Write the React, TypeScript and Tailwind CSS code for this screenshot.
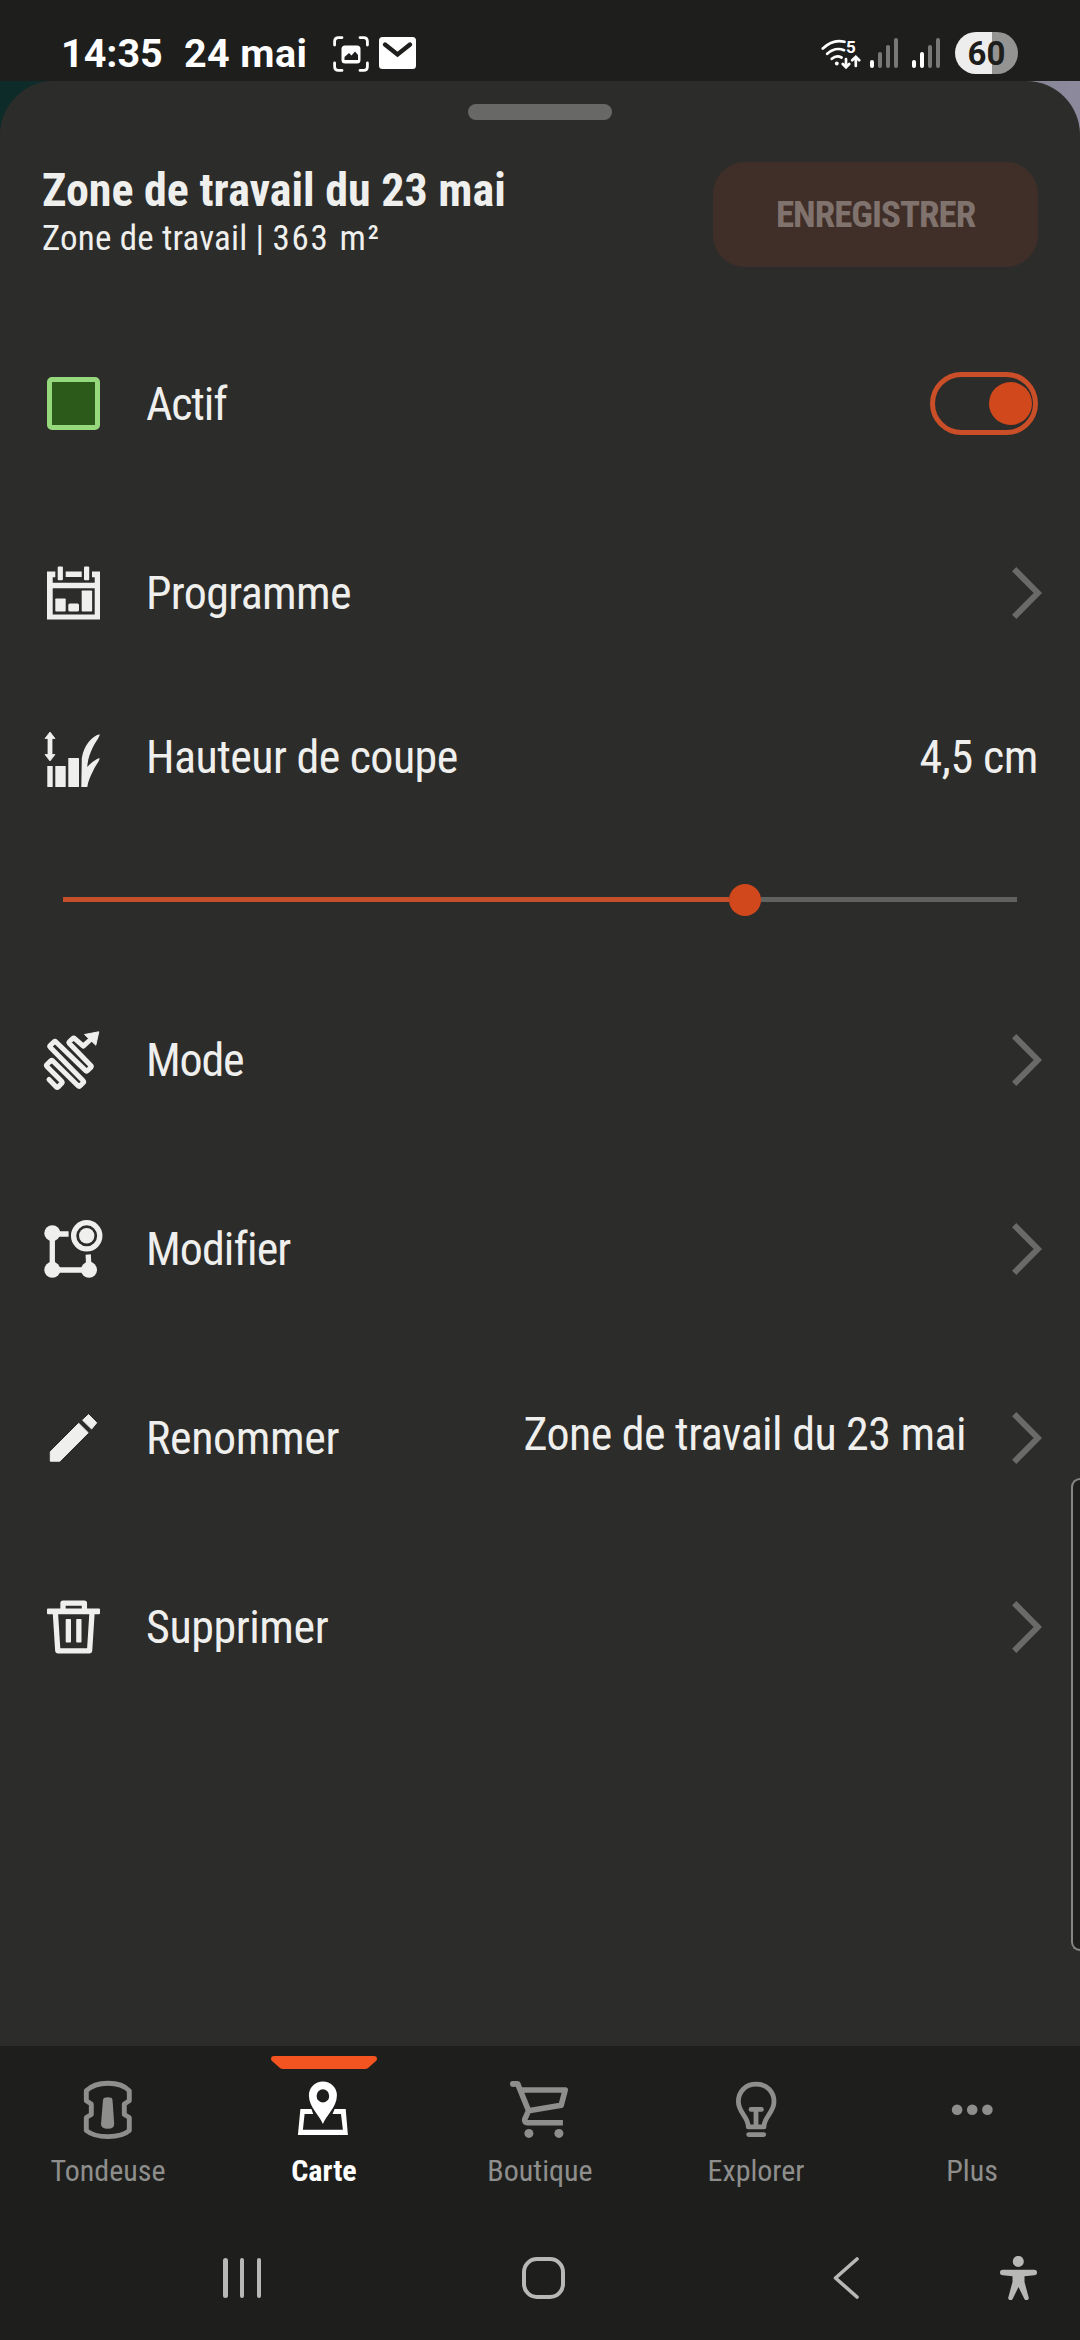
import React from "react";

type IconProps = { children: React.ReactNode; className?: string };

const Icon = ({ children, className = "text-[#efefed]" }: IconProps) => (
  <svg viewBox="0 0 60 60" fill="currentColor" className={`size-[60px] shrink-0 overflow-visible ${className}`}>
    {children}
  </svg>
);

const ScheduleIcon = () => (
  <Icon>
    <path d="M3 8.5H11.3V14.2H8.7V19.8H50.7V14.2H48V8.5H56V56.5H3ZM8.7 25.2V51.5H50.7V25.2Z" fillRule="evenodd" />
    <rect x="21.7" y="8.5" width="16" height="5.5" />
    <rect x="13.7" y="3.5" width="5.2" height="13.7" rx="1" />
    <rect x="40" y="3.5" width="5.2" height="13.7" rx="1" />
    <rect x="11.3" y="35.5" width="10.4" height="13" rx="0.8" />
    <rect x="24.3" y="40.5" width="10.7" height="8" rx="1.5" />
    <rect x="37.7" y="27.5" width="10.4" height="21" rx="0.8" />
  </Icon>
);

const HeightIcon = () => (
  <Icon>
    <path d="M6 5L11 11.5H8V27.5H11L6 34L1 27.5H4V11.5H1Z" stroke="currentColor" strokeWidth="0.8" strokeLinejoin="round" />
    <rect x="3.3" y="39" width="5.4" height="21" />
    <rect x="11.3" y="39" width="10.4" height="21" rx="0.6" />
    <rect x="24.3" y="31" width="10.7" height="29" rx="0.6" />
    <path d="M37.3 60L37.8 31C40 18 48 9.5 55.5 7.3C56.5 9 51 16 49 20C46 26 43.5 33 43.3 40C47 36 51 32.5 55.5 31C56 33 52 38 50 42C46.5 49 44 54 43.3 60Z" />
  </Icon>
);

const ModeIcon = () => (
  <Icon>
    <path
      d="M5 49.5L12.3 57Q13.2 57.9 14.2 57L17.7 53.3Q18.6 52.3 17.7 51.3L2.9 36.4Q2 35.4 2.9 34.5L6.7 30.8Q7.7 29.9 8.6 30.8L34 55.8Q35 56.8 36 55.9L39.2 52.8Q40.1 51.8 39.2 50.8L6.2 17.2Q5.3 16.2 6.3 15.3L10 11.9Q11 11 12 12L41.7 40.6Q42.7 41.5 43.6 40.6L46.8 37.5Q47.7 36.5 46.8 35.5L25.4 13.4Q24.5 12.5 25.5 11.5L28.7 8.5Q29.7 7.6 30.7 8.6L39.3 16.2L46 10"
      fill="none"
      stroke="currentColor"
      strokeWidth="5"
      strokeLinejoin="round"
      strokeLinecap="round"
    />
    <path d="M54.8 1.8L40.5 4.5L51.8 15.2Z" stroke="currentColor" strokeWidth="1" strokeLinejoin="round" />
  </Icon>
);

const EditAreaIcon = () => (
  <Icon>
    <circle cx="8.3" cy="14.2" r="8" />
    <circle cx="8.3" cy="50.8" r="8" />
    <circle cx="45" cy="50.8" r="8" />
    <circle cx="42.7" cy="16.8" r="7.7" />
    <g fill="none" stroke="currentColor" strokeWidth="5.3">
      <circle cx="42.7" cy="16.8" r="13.1" />
      <path d="M8.3 14V51H45L44.2 35.5M10 15H24.6" />
    </g>
  </Icon>
);

const PencilIcon = () => (
  <Icon>
    <g stroke="currentColor" strokeWidth="1" strokeLinejoin="round">
      <path d="M6.3 53.2V43.8L34.7 15.3L44.2 24.7L15.8 53.2Z" />
      <path d="M38.6 12.2L44.6 6.6L52.7 14.8L47.6 21Z" />
    </g>
  </Icon>
);

const TrashIcon = () => (
  <Icon>
    <rect x="3" y="11.5" width="53" height="5.7" rx="1" />
    <g fill="none" stroke="currentColor" strokeWidth="5.3" strokeLinejoin="round">
      <path d="M19 13V6.2H40.4V13" />
      <path d="M11.4 16L13.8 53.8H45.6L48 16" />
    </g>
    <rect x="21.7" y="22" width="5.3" height="23.5" rx="0.8" />
    <rect x="32.2" y="22" width="5.3" height="23.5" rx="0.8" />
  </Icon>
);

const Chevron = () => (
  <svg viewBox="0 0 30 52" className="h-[52px] w-[30px] shrink-0 text-[#6a6a68]" fill="none" stroke="currentColor" strokeWidth="6">
    <path d="M2.2 2.2L25.8 26L2.2 49.8" />
  </svg>
);

const MowerIcon = () => (
  <Icon className="">
    <path
      d="M30 3.2C21 3.2 13 6 8.3 10.8V20.8L13.3 24V34.5L8.3 37.5V50.5C13 54.5 21 56.6 30 56.6S47 54.5 51.3 50.5V37.5L46.3 34.5V24L51.3 20.8V10.8C47 6 39 3.2 30 3.2Z"
      fill="none"
      stroke="currentColor"
      strokeWidth="4.9"
      strokeLinejoin="round"
    />
    <path d="M26.5 17.7Q30 16.9 33.2 17.7Q34.2 18 34.5 20L36.2 44Q36.3 48.6 30 48.8Q22.8 48.6 23 44L25 20Q25.3 18 26.5 17.7Z" />
  </Icon>
);

const MapIcon = () => (
  <Icon className="">
    <path
      fillRule="evenodd"
      d="M28.9 44C26 36 14.9 27 14.9 15.5A14 14 0 0 1 42.9 15.5C42.9 27 31.8 36 28.9 44ZM28.9 9.3A6.3 6.6 0 1 0 28.9 22.5A6.3 6.6 0 1 0 28.9 9.3Z"
    />
    <path d="M6.4 29H17.4L19.2 34H10.6L8.9 49.7H48.9L47 34H38.5L40.6 29H51.7L53.9 55H3.9Z" />
  </Icon>
);

const CartIcon = () => (
  <Icon className="">
    <path
      d="M2.5 3.9H7.7L18.6 30.7L51.2 25.3L55.2 10H12M18.6 30.7L14.8 39.2Q14 42.8 17.5 42.8H52.9"
      fill="none"
      stroke="currentColor"
      strokeWidth="5.6"
      strokeLinejoin="round"
    />
    <circle cx="2.8" cy="3.9" r="2.8" />
    <circle cx="18.9" cy="53.4" r="4.5" />
    <circle cx="48.9" cy="53.4" r="4.5" />
  </Icon>
);

const BulbIcon = () => (
  <Icon className="">
    <g fill="none" stroke="currentColor" strokeWidth="4.8" strokeLinejoin="round" strokeLinecap="round">
      <path d="M22.3 46.9C22.3 36 12.4 33 12.4 21.8C12.4 11 20 4.2 30.2 4.2S48 11 48 21.8C48 33 38 36 38 46.9Z" />
      <path d="M25 29.4H35.4M30 29.4V46" />
      <path d="M22.7 54.6H37.7" />
    </g>
  </Icon>
);

const DotsIcon = () => (
  <Icon className="">
    <circle cx="15.1" cy="29.7" r="5.3" />
    <circle cx="30.2" cy="29.7" r="5.3" />
    <circle cx="45.4" cy="29.7" r="5.3" />
  </Icon>
);

const StatusBar = () => (
  <header className="flex h-[81px] items-start bg-[#1e1e1c] text-white font-stretch-normal">
    <div className="flex pt-[34px] pl-[61px] text-[39.5px] leading-none font-bold whitespace-nowrap">
      <span className="w-[123px]">14:35</span>
      <span className="w-[149px] tracking-[0.4px]">24 mai</span>
    </div>
    <svg viewBox="0 0 36 36" className="mt-[36px] size-9" fill="none" stroke="currentColor" strokeWidth="2.8" strokeLinecap="round">
      <path d="M1.6 9V5.5Q1.6 1.6 5.5 1.6H9M27 1.6h3.5Q34.4 1.6 34.4 5.5V9M34.4 27v3.5Q34.4 34.4 30.5 34.4H27M9 34.4H5.5Q1.6 34.4 1.6 30.5V27" />
      <rect x="8.5" y="9.5" width="19" height="18" rx="3.5" fill="currentColor" stroke="none" />
      <path d="M11.5 24V21L16 17L18.5 19.5L22 15.5L25 19V24Z" fill="#1e1e1c" stroke="none" />
    </svg>
    <svg viewBox="0 0 37 32" className="mt-[37px] ml-[10px] h-8 w-[37px]" fill="none">
      <rect width="37" height="32" rx="3.5" fill="currentColor" />
      <path d="M6 7.5L18.5 17.5L31 7.5" stroke="#1e1e1c" strokeWidth="4.4" strokeLinecap="round" />
    </svg>
    <div className="relative mt-[38px] ml-[405px] h-8 w-10">
      <svg viewBox="0 0 40 32" className="h-8 w-10" fill="none" stroke="currentColor" strokeWidth="2.7" strokeLinecap="round">
        <path d="M1.8 10.5C8 4.5 16 1.8 23.5 3.8M6.2 15.8C11 11.3 17.5 9.8 23 12.2M10.8 20.8C14 18 17.5 17.8 20.5 19.5" />
        <circle cx="15.8" cy="25.5" r="1.9" fill="currentColor" stroke="none" />
        <path d="M25 21V29M21.8 26L25 29.3L28.2 26M34.8 28V19.8M31.2 22.3L34.8 18.8L38.2 22.3" />
      </svg>
      <span className="absolute top-[1px] left-[25px] text-[17px] leading-none font-bold">5</span>
    </div>
    <div className="mt-[38px] ml-[9px] flex h-[30px] w-7 items-end justify-between text-white/40">
      <i className="h-2 w-1 rounded-full bg-white" />
      <i className="h-4 w-1 rounded-full bg-current" />
      <i className="h-[23px] w-1 rounded-full bg-current" />
      <i className="h-[30px] w-1 rounded-full bg-current" />
    </div>
    <div className="mt-[38px] ml-[14px] flex h-[30px] w-7 items-end justify-between text-white/40">
      <i className="h-2 w-1 rounded-full bg-white" />
      <i className="h-4 w-1 rounded-full bg-white" />
      <i className="h-[23px] w-1 rounded-full bg-current" />
      <i className="h-[30px] w-1 rounded-full bg-current" />
    </div>
    <div className="mt-[32px] ml-[15px] flex h-[42px] w-[63px] items-center justify-center rounded-full bg-linear-to-r from-[#ededed] from-59% to-[#949492] to-59% text-[33px] leading-none font-bold text-[#1e1e1c]">
      60
    </div>
  </header>
);

type RowProps = { icon: React.ReactNode; label: string; track: string; children?: React.ReactNode };

const Row = ({ icon, label, track, children }: RowProps) => (
  <div className="flex h-[189px] items-center pr-[38px] pl-[44px]">
    {icon}
    <span className={`ml-[42px] text-[46px] leading-none whitespace-nowrap ${track}`}>{label}</span>
    <div className="ml-auto flex items-center">{children}</div>
  </div>
);

const tabs = [
  { label: "Tondeuse", Glyph: MowerIcon, active: false },
  { label: "Carte", Glyph: MapIcon, active: true },
  { label: "Boutique", Glyph: CartIcon, active: false },
  { label: "Explorer", Glyph: BulbIcon, active: false },
  { label: "Plus", Glyph: DotsIcon, active: false },
];

const TabBar = () => (
  <nav className="grid h-[170px] grid-cols-5 pt-[10px]">
    {tabs.map(({ label, Glyph, active }) => (
      <div key={label} className={`flex flex-col items-center ${active ? "text-white" : "text-[#8e8e8c]"}`}>
        <div className="flex h-6 items-start">
          {active && (
            <svg viewBox="0 0 106 13" className="h-[13px] w-[106px] text-[#f4541f]" fill="currentColor">
              <path d="M3 0H103Q106 0 106 3Q106 4 105 5L97 12Q96 13 94 13H12Q10 13 9 12L1 5Q0 4 0 3Q0 0 3 0Z" />
            </svg>
          )}
        </div>
        <Glyph />
        <span className={`mt-4 text-[30px] leading-none ${active ? "font-bold" : "font-normal"}`}>{label}</span>
      </div>
    ))}
  </nav>
);

const SystemNav = () => (
  <div className="flex h-[124px] items-center pl-[223px] text-[#b8b8b6]">
    <div className="flex h-10 w-[38px] justify-between">
      <i className="w-[4.5px] rounded-full bg-current" />
      <i className="w-[4.5px] rounded-full bg-current" />
      <i className="w-[4.5px] rounded-full bg-current" />
    </div>
    <div className="ml-[261px] h-[42px] w-[43px] rounded-[15px] border-4 border-current" />
    <svg viewBox="0 0 26 42" className="ml-[268px] h-[42px] w-[26px]" fill="none" stroke="currentColor" strokeWidth="3.6" strokeLinecap="round" strokeLinejoin="round">
      <path d="M24 2L2.5 21L24 40" />
    </svg>
    <svg viewBox="0 0 37 44" className="ml-[141px] h-11 w-[37px]" fill="currentColor">
      <circle cx="18.3" cy="5.4" r="5.5" />
      <path d="M2.8 13.7H34.2A2.8 2.8 0 0 1 34.2 19.3L24.5 20.3V26L28.7 41.5A2.3 2.3 0 0 1 24.4 43L18.5 31L12.6 43A2.3 2.3 0 0 1 8.3 41.5L12.5 26V20.3L2.8 19.3A2.8 2.8 0 0 1 2.8 13.7Z" />
    </svg>
  </div>
);

export default function App() {
  return (
    <div className="relative flex h-[2340px] w-[1080px] flex-col overflow-hidden bg-[#1e1e1c] font-['Roboto',sans-serif] text-[#efefed] font-stretch-condensed">
      <StatusBar />
      <div className="flex h-[1965px] flex-col bg-linear-to-r from-[#0c2b29] from-[20px] to-[#8b899b] to-[1070px]">
        <main className="flex flex-1 flex-col rounded-t-[54px] bg-[#2c2c2a]">
          <div className="mx-auto mt-[23px] h-4 w-36 rounded-full bg-[#686866]" />
          <div className="mt-[42px] flex h-[147px] items-start justify-between px-[42px]">
            <div className="flex flex-col gap-2 pt-[5px] whitespace-nowrap">
              <h1 className="text-[46px] leading-none font-bold">Zone de travail du 23 mai</h1>
              <p className="text-[35px] leading-none tracking-[0.15px]">
                Zone de travail | <span className="tracking-[1.8px]">363 m²</span>
              </p>
            </div>
            <button className="flex h-[105px] w-[325px] items-center justify-center rounded-[32px] bg-[#402f29] text-[37px] leading-none font-bold tracking-[-1px] text-[#80736e]">
              ENREGISTRER
            </button>
          </div>

          <Row
            icon={<div className="mr-[4px] ml-[3px] size-[53px] rounded-[5px] border-[5.5px] border-[#96d97d] bg-[#2b5a1b]" />}
            label="Actif"
            track="tracking-[-1.2px]"
          >
            <div className="mr-1 flex h-[63px] w-[108px] items-center justify-end rounded-full border-5 border-[#ca4e27] pr-[1.5px]">
              <div className="size-[43px] rounded-full bg-[#d1481c]" />
            </div>
          </Row>
          <Row icon={<ScheduleIcon />} label="Programme" track="tracking-[-0.65px]">
            <Chevron />
          </Row>

          <div className="flex h-[140px] items-center pr-[42px] pl-[44px]">
            <HeightIcon />
            <span className="ml-[42px] text-[46px] leading-none tracking-[-0.55px]">Hauteur de coupe</span>
            <span className="ml-auto text-[46px] leading-none tracking-[-0.4px]">4,5 cm</span>
          </div>
          <div className="flex h-[138px] items-center px-[63px] pt-[7px]">
            <div className="h-[5px] w-[666px] bg-[#c54f2a]" />
            <div className="size-8 rounded-full bg-[#d1481c]" />
            <div className="h-[5px] flex-1 bg-[#61615f]" />
          </div>

          <Row icon={<ModeIcon />} label="Mode" track="tracking-[-1.2px]">
            <Chevron />
          </Row>
          <Row icon={<EditAreaIcon />} label="Modifier" track="tracking-[-0.95px]">
            <Chevron />
          </Row>
          <Row icon={<PencilIcon />} label="Renommer" track="tracking-[-0.4px]">
            <span className="mr-[46px] pb-2 text-[46px] leading-none tracking-[-0.55px]">Zone de travail du 23 mai</span>
            <Chevron />
          </Row>
          <Row icon={<TrashIcon />} label="Supprimer" track="tracking-[-0.45px]">
            <Chevron />
          </Row>
        </main>
      </div>
      <TabBar />
      <SystemNav />
      <div className="absolute top-[1478px] right-0 h-[473px] w-[9px] rounded-l-[12px] border-2 border-r-0 border-[#868684] bg-[#1e1e1c]" />
    </div>
  );
}
